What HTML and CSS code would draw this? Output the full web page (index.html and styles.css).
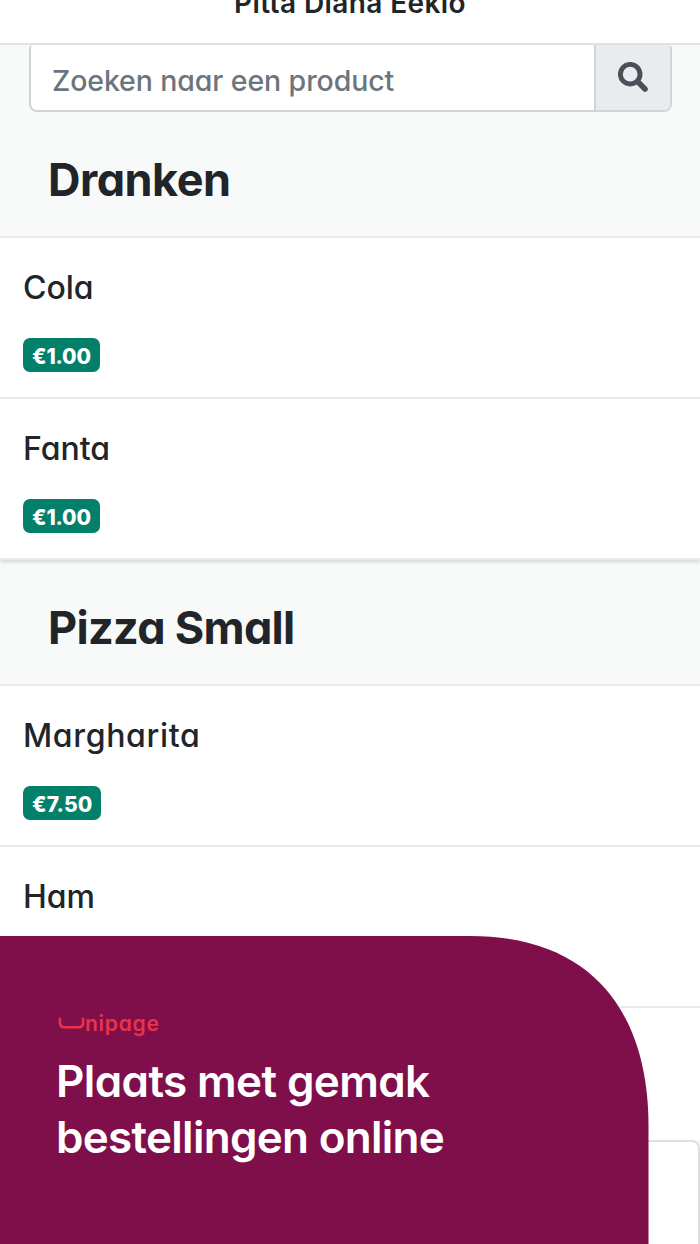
FILE: index.html
```html
<!DOCTYPE html>
<html lang="nl">
<head>
  <meta charset="UTF-8" />
  <meta name="viewport" content="width=device-width, initial-scale=1.0"/>
  <title>Pitta Diana Eeklo</title>
  <link rel="stylesheet" href="styles.css">
</head>
<body>
  <header class="topbar"><span>Pitta Diana Eeklo</span></header>

  <main>
    <div class="search">
      <div class="search-input"><span>Zoeken naar een product</span></div>
      <div class="search-button">
        <svg viewBox="0 0 30 30" width="30" height="30">
          <circle cx="12.2" cy="12.2" r="9.8" fill="none" stroke="#495057" stroke-width="4.9"/>
          <path d="M19.8 19.8L27 27" stroke="#495057" stroke-width="5.6" stroke-linecap="round"/>
        </svg>
      </div>
    </div>

    <h2 class="category"><span>Dranken</span></h2>
    <ul class="products">
      <li><span class="name">Cola</span><span class="price">€1.00</span></li>
      <li><span class="name">Fanta</span><span class="price">€1.00</span></li>
    </ul>

    <h2 class="category tight"><span>Pizza Small</span></h2>
    <ul class="products open">
      <li><span class="name long">Margharita</span><span class="price wide">€7.50</span></li>
      <li><span class="name">Ham</span></li>
    </ul>
    <div class="card"></div>
  </main>

  <section class="banner">
    <div class="logo">
      <svg viewBox="0 0 27 13" width="27" height="13">
        <path d="M1.9 0.7V5.5Q1.9 10.3 6.5 10.3H20.5Q25.1 10.3 25.1 5.5V0.7" fill="none" stroke="#ea3347" stroke-width="2.6"/>
      </svg>
      <span>nipage</span>
    </div>
    <h1><span class="line-one">Plaats met gemak</span><br><span>bestellingen online</span></h1>
  </section>
</body>
</html>
```

FILE: styles.css
```css
* {
  box-sizing: border-box;
  margin: 0;
  padding: 0;
}
body {
  height: 1244px;
  overflow: hidden;
  position: relative;
  font-family: 'Inter', sans-serif;
  font-feature-settings: 'cv11';
  background: #fff;
  color: #212529;
}
.topbar {
  height: 45px;
  border-bottom: 2px solid #dee2e3;
  font-size: 28px;
  font-weight: 600;
  line-height: 7px;
  letter-spacing: 0.4px;
  text-align: center;
  font-feature-settings: normal;
}
main {
  background: #f8faf9;
}
.search {
  display: flex;
  height: 67px;
  margin: 0 28px 0 29px;
  border: 2px solid #ced4da;
  border-top: 0;
  border-radius: 4px 4px 8px 8px;
  background: #fff;
  overflow: hidden;
}
.search-input {
  flex: 1;
  padding: 0 21px;
  font-size: 28.5px;
  font-weight: 500;
  line-height: 71px;
  letter-spacing: -0.1px;
  color: #6c757d;
}
.search-button {
  width: 76px;
  padding: 17px 0 0 22px;
  border-left: 2px solid #ced4da;
  background: #e9ecef;
}
.category {
  height: 124px;
  padding-left: 48px;
  font-size: 45px;
  font-weight: 700;
  line-height: 136px;
  letter-spacing: -0.5px;
  overflow: hidden;
}
.category.tight {
  letter-spacing: -0.7px;
}
.products {
  position: relative;
  list-style: none;
  background: #fff;
  border-top: 2px solid #ebeded;
  box-shadow: 0 2px 4px rgba(0, 0, 0, 0.15);
  clip-path: inset(0 0 -8px 0);
}
.products li {
  display: flex;
  flex-direction: column;
  align-items: flex-start;
  height: 161px;
  padding: 28px 23px 0;
  border-bottom: 2px solid #e8e9ea;
}
.name {
  font-size: 32px;
  font-weight: 500;
  line-height: 44px;
}
.name.long {
  letter-spacing: 0.65px;
}
.price {
  height: 34px;
  margin-top: 28px;
  padding: 0 9px;
  border-radius: 7px;
  background: #03806a;
  color: #fff;
  font-size: 21px;
  font-weight: 800;
  line-height: 38px;
  letter-spacing: -0.15px;
}
.price.wide {
  letter-spacing: 0.1px;
}
.products.open {
  box-shadow: none;
  padding-bottom: 132px;
}
.card {
  height: 105px;
  border: 2px solid #dfdfdf;
  border-bottom: 0;
  border-radius: 8px 8px 0 0;
  background: #fff;
}
.banner {
  position: absolute;
  left: 0;
  bottom: 0;
  width: 649px;
  height: 308px;
  padding: 77px 56px 0;
  clip-path: path('M0 0H470C597 0 648.5 82 648.5 190V308H0Z');
  background: #7e0f4b;
  color: #fff;
}
.logo {
  display: flex;
  align-items: center;
  height: 20px;
  margin-left: 2px;
  color: #ea3347;
  font-size: 21px;
  font-weight: 600;
  letter-spacing: 0.75px;
}
.banner h1 {
  margin-top: 20px;
  font-size: 44px;
  font-weight: 600;
  line-height: 56px;
  letter-spacing: -0.7px;
  white-space: nowrap;
}
.banner .line-one {
  letter-spacing: -0.6px;
}
```
